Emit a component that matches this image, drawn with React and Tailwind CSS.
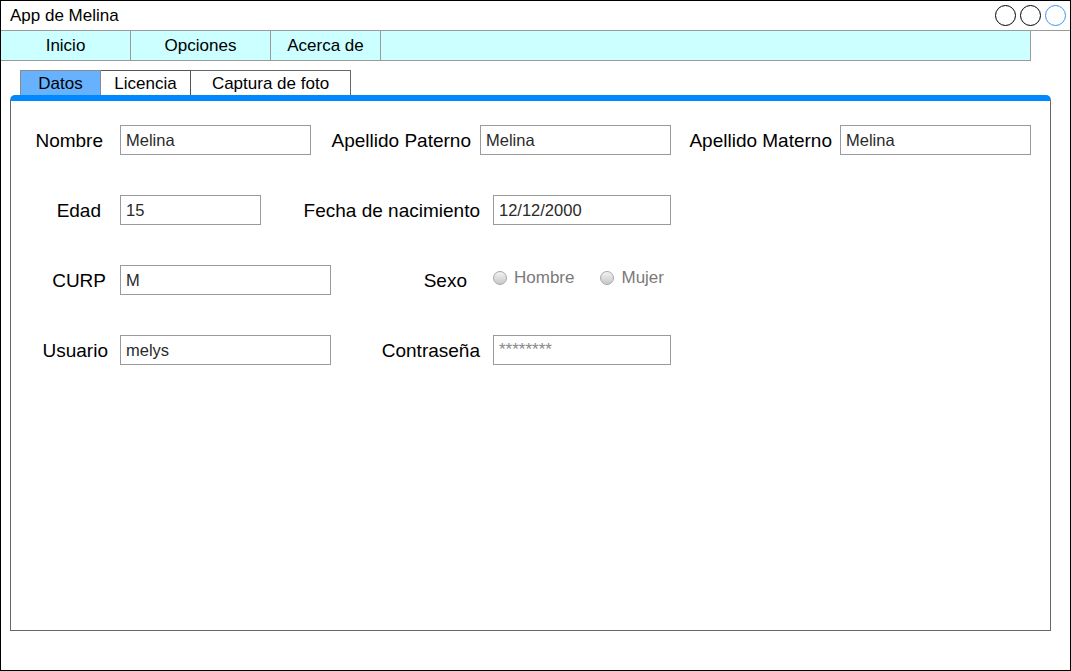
import React from "react";

const font = { fontFamily: '"Liberation Sans", Arial, sans-serif' };

const Label = ({ w, children }) => (
  <span className={`${w} shrink-0 text-right text-[19px] text-black mt-[2px]`}>{children}</span>
);

const Field = ({ ml, w, value, muted }) => (
  <div
    className={`${ml} ${w} h-[30px] shrink-0 border border-[#9a9a9a] bg-white pl-[5px] flex ${
      muted ? "text-[17px] leading-none text-[#888] items-start pt-[5px]" : "text-[16.5px] text-[#2a2a2a] items-center"
    }`}
  >
    {value}
  </div>
);

const Radio = ({ label, className }) => (
  <div className={`flex items-center gap-[7px] ${className}`}>
    <span className="w-[14px] h-[14px] rounded-full border border-[#a8a8a8] bg-gradient-to-b from-[#f2f2f2] to-[#c8c8c8]" />
    <span className="text-[17px] text-[#7a7a7a]">{label}</span>
  </div>
);

const App = () => {
  return (
    <div
      className="w-[1071px] h-[671px] border border-black bg-white flex flex-col overflow-hidden"
      style={font}
    >
      {/* Title bar */}
      <div className="h-[30px] shrink-0 border-b border-[#9a9a9a] flex items-center justify-between pl-[9px] pr-[4px]">
        <span className="text-[17px] text-black">App de Melina</span>
        <div className="flex gap-[4px]">
          <span className="w-[21px] h-[21px] rounded-full border-[1.5px] border-black" />
          <span className="w-[21px] h-[21px] rounded-full border-[1.5px] border-black" />
          <span className="w-[21px] h-[21px] rounded-full border-[1.5px] border-[#3a95f5]" />
        </div>
      </div>

      {/* Menu bar */}
      <div className="w-[1030px] h-[30px] shrink-0 flex bg-[#ccffff] border-b border-r border-[#9a9a9a] text-[17px] text-black">
        <div className="w-[130px] border-r border-[#9a9a9a] flex items-center justify-center">Inicio</div>
        <div className="w-[140px] border-r border-[#9a9a9a] flex items-center justify-center">Opciones</div>
        <div className="w-[110px] border-r border-[#9a9a9a] flex items-center justify-center">Acerca de</div>
      </div>

      {/* Tabs */}
      <div className="mt-[9px] pl-[19px] flex h-[25px] text-[17px] text-black">
        <div className="w-[81px] pt-[1px] bg-[#66b2ff] border border-b-0 border-[#8a8a8a] flex items-center justify-center">Datos</div>
        <div className="w-[90px] pt-[1px] border border-l-0 border-b-0 border-[#555] flex items-center justify-center">Licencia</div>
        <div className="w-[160px] pt-[1px] border border-l-0 border-b-0 border-[#666] flex items-center justify-center">Captura de foto</div>
      </div>

      {/* Panel */}
      <div className="ml-[9px] w-[1041px] h-[536px] border border-[#666] border-t-[6px] border-t-[#0088ff] rounded-t-[5px] pt-[24px] flex flex-col gap-[40px]">
        <div className="flex items-center h-[30px]">
          <Label w="w-[92px]">Nombre</Label>
          <Field ml="ml-[17px]" w="w-[191px]" value="Melina" />
          <Label w="w-[160px]">Apellido Paterno</Label>
          <Field ml="ml-[9px]" w="w-[191px]" value="Melina" />
          <Label w="w-[161px]">Apellido Materno</Label>
          <Field ml="ml-[8px]" w="w-[191px]" value="Melina" />
        </div>

        <div className="flex items-center h-[30px]">
          <Label w="w-[90px]">Edad</Label>
          <Field ml="ml-[19px]" w="w-[141px]" value="15" />
          <Label w="w-[219px]">Fecha de nacimiento</Label>
          <Field ml="ml-[13px]" w="w-[178px]" value="12/12/2000" />
        </div>

        <div className="flex items-center h-[30px]">
          <Label w="w-[95px]">CURP</Label>
          <Field ml="ml-[14px]" w="w-[211px]" value="M" />
          <Label w="w-[136px]">Sexo</Label>
          <Radio className="ml-[26px] -mt-[4px]" label="Hombre" />
          <Radio className="ml-[26px] -mt-[4px]" label="Mujer" />
        </div>

        <div className="flex items-center h-[30px]">
          <Label w="w-[97px]">Usuario</Label>
          <Field ml="ml-[12px]" w="w-[211px]" value="melys" />
          <Label w="w-[149px]">Contraseña</Label>
          <Field ml="ml-[13px]" w="w-[178px]" value="********" muted />
        </div>
      </div>
    </div>
  );
};

export default App;
